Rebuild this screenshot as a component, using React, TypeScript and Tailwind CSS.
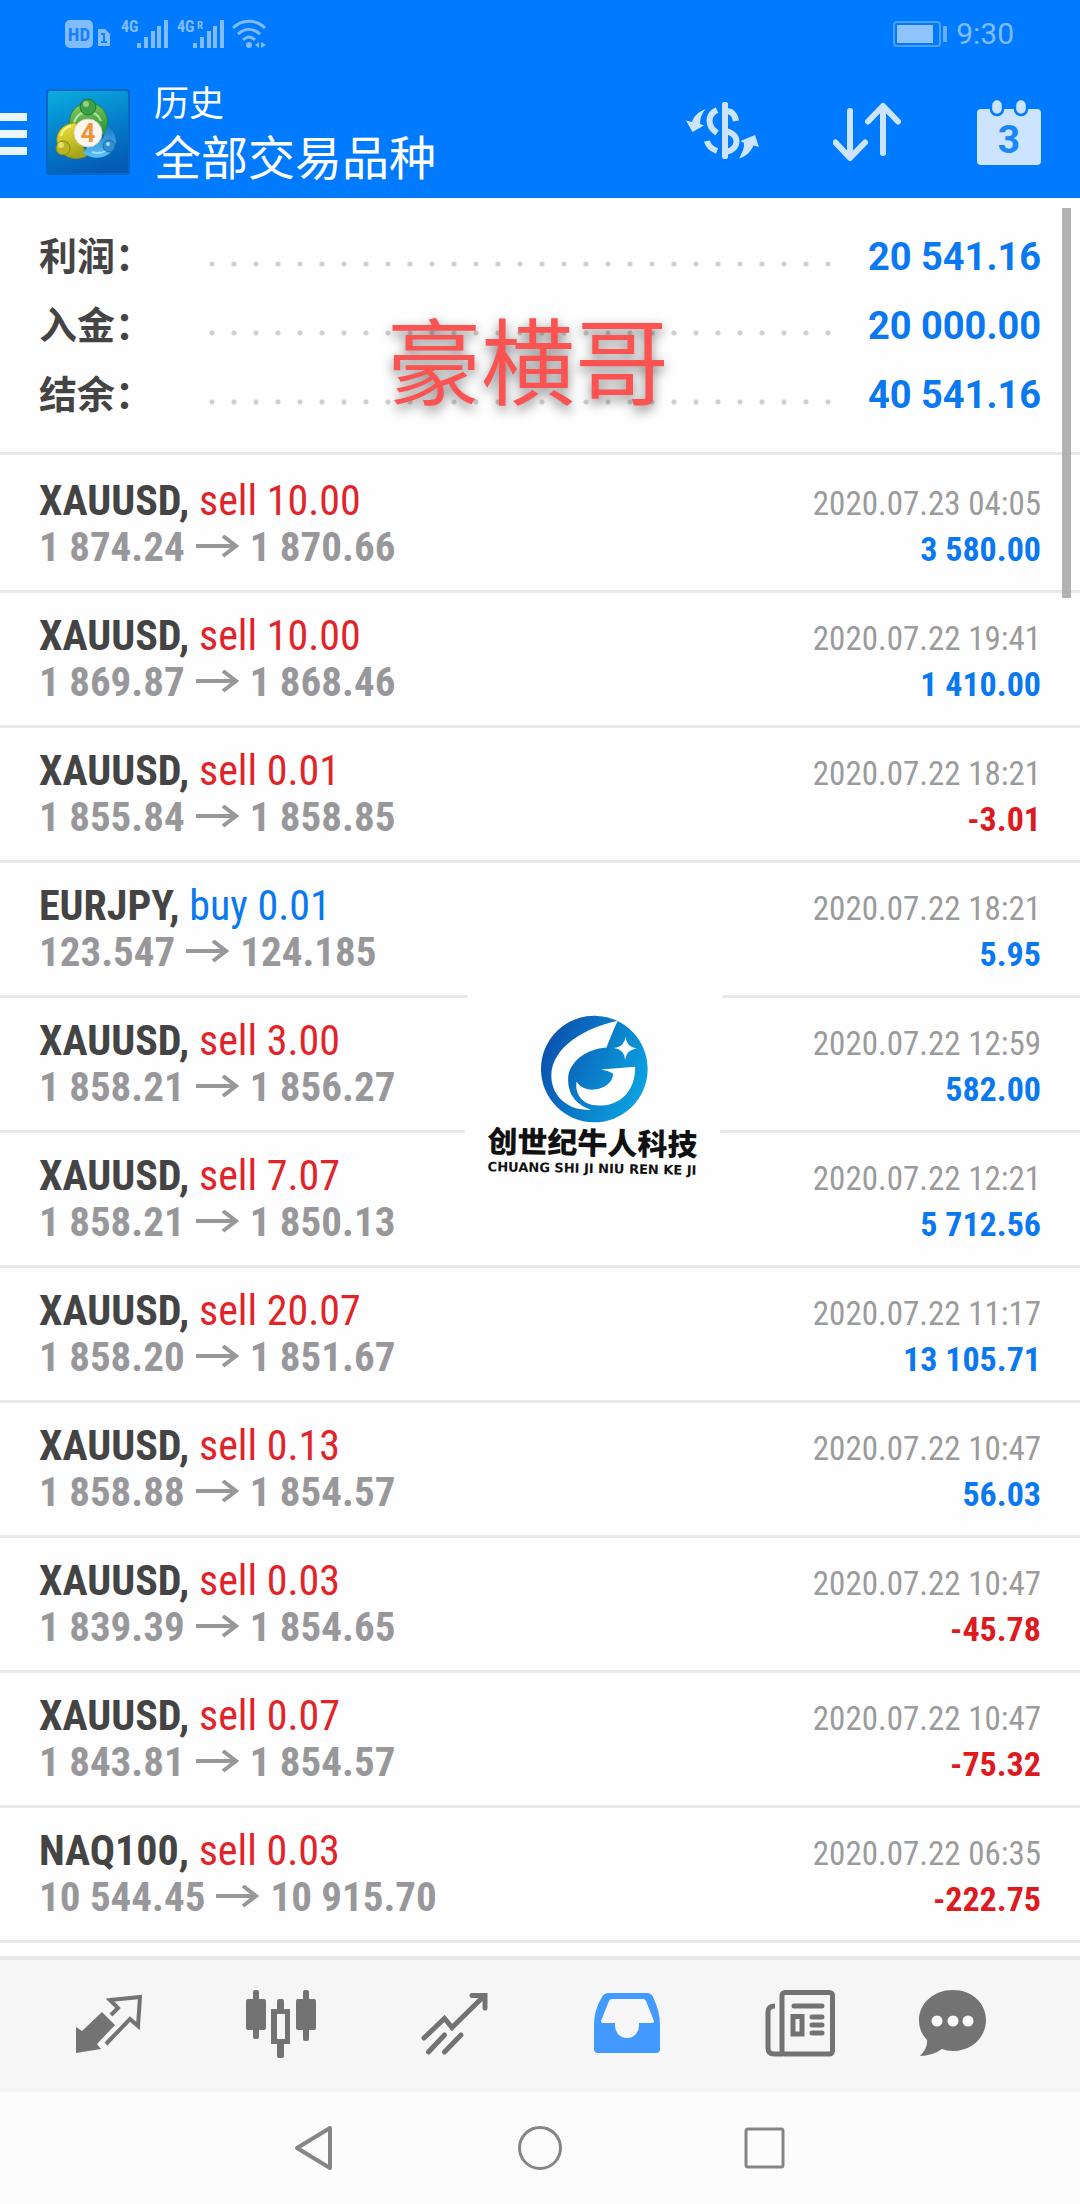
import React from 'react';

type Deal = {
  symbol: string;
  side: 'buy' | 'sell';
  volume: string;
  open: string;
  close: string;
  time: string;
  profit: string;
};

const summary = [
  { label: '利润：', value: '20 541.16' },
  { label: '入金：', value: '20 000.00' },
  { label: '结余：', value: '40 541.16' },
];

const deals: Deal[] = [
  { symbol: 'XAUUSD', side: 'sell', volume: '10.00', open: '1 874.24', close: '1 870.66', time: '2020.07.23 04:05', profit: '3 580.00' },
  { symbol: 'XAUUSD', side: 'sell', volume: '10.00', open: '1 869.87', close: '1 868.46', time: '2020.07.22 19:41', profit: '1 410.00' },
  { symbol: 'XAUUSD', side: 'sell', volume: '0.01', open: '1 855.84', close: '1 858.85', time: '2020.07.22 18:21', profit: '-3.01' },
  { symbol: 'EURJPY', side: 'buy', volume: '0.01', open: '123.547', close: '124.185', time: '2020.07.22 18:21', profit: '5.95' },
  { symbol: 'XAUUSD', side: 'sell', volume: '3.00', open: '1 858.21', close: '1 856.27', time: '2020.07.22 12:59', profit: '582.00' },
  { symbol: 'XAUUSD', side: 'sell', volume: '7.07', open: '1 858.21', close: '1 850.13', time: '2020.07.22 12:21', profit: '5 712.56' },
  { symbol: 'XAUUSD', side: 'sell', volume: '20.07', open: '1 858.20', close: '1 851.67', time: '2020.07.22 11:17', profit: '13 105.71' },
  { symbol: 'XAUUSD', side: 'sell', volume: '0.13', open: '1 858.88', close: '1 854.57', time: '2020.07.22 10:47', profit: '56.03' },
  { symbol: 'XAUUSD', side: 'sell', volume: '0.03', open: '1 839.39', close: '1 854.65', time: '2020.07.22 10:47', profit: '-45.78' },
  { symbol: 'XAUUSD', side: 'sell', volume: '0.07', open: '1 843.81', close: '1 854.57', time: '2020.07.22 10:47', profit: '-75.32' },
  { symbol: 'NAQ100', side: 'sell', volume: '0.03', open: '10 544.45', close: '10 915.70', time: '2020.07.22 06:35', profit: '-222.75' },
];

const SignalBars: React.FC<{ roaming?: boolean }> = ({ roaming }) => (
  <svg className="overflow-visible" width="48" height="30" viewBox="0 0 48 30" fill="currentColor">
    <text x="0" y="13" fontSize="16" fontWeight="700" fontFamily="Roboto Condensed, sans-serif">4G</text>
    {roaming && <text x="20" y="10" fontSize="11" fontWeight="700" fontFamily="Roboto Condensed, sans-serif">R</text>}
    <rect x="16" y="24" width="4" height="5" />
    <rect x="23" y="18" width="4" height="11" />
    <rect x="30" y="12" width="4" height="17" />
    <rect x="36" y="7" width="4" height="22" />
    <rect x="43" y="1" width="4" height="28" />
  </svg>
);

const StatusBar: React.FC = () => (
  <div className="flex h-[65px] items-center justify-between pl-[65px] pr-[66px] pt-[2px] text-[#80bcff]">
    <div className="flex items-center">
      <svg width="46" height="30" viewBox="0 0 46 30" fill="currentColor">
        <rect x="0" y="1" width="28" height="28" rx="5" />
        <text x="14" y="22" textAnchor="middle" fontSize="19" fontWeight="700" fill="#1a80f5" fontFamily="Roboto Condensed, sans-serif">HD</text>
        <path d="M33 10h7l5 5v12H33z" />
        <path d="M36 15h3v8M36 23h6" stroke="#1a80f5" strokeWidth="2" fill="none" />
      </svg>
      <div className="ml-[10px] flex gap-[8px]">
        <SignalBars />
        <SignalBars roaming />
      </div>
      <svg className="ml-[7px]" width="36" height="30" viewBox="0 0 36 30" fill="none" stroke="currentColor" strokeWidth="3">
        <path d="M1 9C10 0 24 0 33 9M6 15c7-6 15-6 22 0M11 21c4-4 8-4 12 0" />
        <circle cx="17" cy="26" r="3" fill="currentColor" stroke="none" />
        <path d="M27 23l-4 3 4 3zM29 23l5 3-5 3z" fill="currentColor" stroke="none" />
      </svg>
    </div>
    <div className="flex items-center gap-[8px]">
      <svg width="55" height="28" viewBox="0 0 55 28">
        <rect x="1" y="2" width="46" height="24" rx="3" fill="none" stroke="#4ba0ff" strokeWidth="2" />
        <rect x="4" y="5" width="36" height="18" fill="#90c4ff" />
        <rect x="50" y="6" width="4" height="16" rx="1" fill="#66afff" />
      </svg>
      <span className="font-['Roboto'] text-[30px] leading-none">9:30</span>
    </div>
  </div>
);

const AppLogo: React.FC = () => (
  <svg className="shrink-0" width="84" height="86" viewBox="0 0 84 86">
    <defs>
      <linearGradient id="tile" x1="0.3" y1="0" x2="0.6" y2="1">
        <stop offset="0" stopColor="#0aa6dc" />
        <stop offset="0.55" stopColor="#0579c8" />
        <stop offset="1" stopColor="#045bb4" />
      </linearGradient>
      <linearGradient id="green" x1="0" y1="0" x2="0.3" y2="1">
        <stop offset="0" stopColor="#8ccf63" />
        <stop offset="1" stopColor="#2f9a3c" />
      </linearGradient>
      <linearGradient id="yellow" x1="0" y1="0" x2="0.4" y2="1">
        <stop offset="0" stopColor="#f3e93c" />
        <stop offset="1" stopColor="#a8a51c" />
      </linearGradient>
      <linearGradient id="blue" x1="0" y1="0" x2="0" y2="1">
        <stop offset="0" stopColor="#1c7cc4" />
        <stop offset="1" stopColor="#5cc2f5" />
      </linearGradient>
    </defs>
    <rect width="84" height="86" rx="3" fill="#0467c6" />
    <rect x="2" y="2" width="80" height="82" rx="2" fill="url(#tile)" />
    <path d="M24 37a19 19 0 1 1 37 0l-2 8H27z" fill="url(#green)" stroke="#2b8138" />
    <path d="M28 34c2-7 7-11 14-11s11 4 13 9" fill="none" stroke="#b6e79c" strokeWidth="2" />
    <path d="M26 34C12 37 7 50 14 61c5 8 16 11 27 6l-5-12-7-10 2-11z" fill="url(#yellow)" stroke="#8f8c14" />
    <path d="M15 47c1-5 5-9 10-10" fill="none" stroke="#fbf694" strokeWidth="2" />
    <path d="M61 37c9 6 12 17 5 25-7 8-19 9-29 2l6-8 14-6z" fill="url(#blue)" />
    <path d="M46 63c9 3 16-1 20-9" fill="none" stroke="#9ddcff" strokeWidth="2" />
    <circle cx="42" cy="18" r="8" fill="#3d9e45" stroke="#22762f" />
    <circle cx="40" cy="15" r="3" fill="#8fd47c" />
    <circle cx="17" cy="59" r="7" fill="#b9b624" stroke="#858310" />
    <circle cx="15" cy="56" r="3" fill="#e4e069" />
    <circle cx="63" cy="57" r="6" fill="#2f8fd0" stroke="#1b6cae" />
    <circle cx="62" cy="55" r="2" fill="#a4dcfa" />
    <circle cx="42" cy="44" r="14" fill="#fdf6ee" stroke="#d8cfc2" />
    <text x="42" y="53" textAnchor="middle" fontSize="26" fontWeight="700" fill="#ee9440" fontFamily="Roboto, sans-serif">4</text>
  </svg>
);

const Header: React.FC = () => (
  <header className="bg-[#007aff] text-white">
    <StatusBar />
    <div className="flex h-[133px] items-center">
      <button aria-label="Menu" className="mr-[19px] flex w-[27px] flex-col gap-[9px] pt-[4px]">
        <span className="h-[8px] bg-[#eaf5ff]" />
        <span className="h-[8px] bg-[#eaf5ff]" />
        <span className="h-[8px] bg-[#eaf5ff]" />
      </button>
      <AppLogo />
      <div className="ml-[24px] flex-1 pt-[8px]">
        <p className="text-[35px] leading-[46px]">历史</p>
        <h1 className="text-[47px] leading-[62px]">全部交易品种</h1>
      </div>
      <div className="flex items-center gap-[73px] pr-[38px] text-[#cce4ff]">
        <button aria-label="Symbol">
          <svg width="74" height="60" viewBox="0 0 74 60" fill="currentColor">
            <path d="M19.700 7C12 10 8 14 6 20L0 18.500 6.500 30 18 23.500 14 22C14 16 16 11 19.700 7Z" />
            <path d="M53 56.500C56 51 58.500 46 58 41L54.500 39 69 33 73 45 67.500 43.500C65 49 61 54 53 56.500Z" />
            <rect x="36" y="0" width="6" height="57" rx="2" />
            <path d="M31 8C21 13 21 24 31 31M21 39c1 5 5 8 10 10M40 9c6 0 9 4 10 10M40 29c14 3 14 18 0 21" fill="none" stroke="currentColor" strokeWidth="6" />
          </svg>
        </button>
        <button aria-label="Sort">
          <svg width="70" height="60" viewBox="0 0 70 60" fill="none" stroke="currentColor" strokeWidth="6" strokeLinecap="round" strokeLinejoin="round">
            <path d="M17 9v46M2.500 40.500 17 56l15-15.500M50 51V5M35 19.500 50 4l15 15.500" />
          </svg>
        </button>
        <button aria-label="Period">
          <svg width="66" height="68" viewBox="0 0 66 68" fill="currentColor">
            <rect x="1" y="11" width="64" height="56" rx="4" />
            <rect x="15" y="1" width="12" height="16" rx="6" stroke="#007aff" strokeWidth="2.500" />
            <rect x="39" y="1" width="12" height="16" rx="6" stroke="#007aff" strokeWidth="2.500" />
            <text x="33" y="55" textAnchor="middle" fontSize="39" fontWeight="700" fill="#1a86f8" fontFamily="Roboto, sans-serif">3</text>
          </svg>
        </button>
      </div>
    </div>
  </header>
);

const Summary: React.FC = () => (
  <section className="relative border-b-[3px] border-[#e8e8e8] pb-[23px] pl-[39px] pr-[39px] pt-[24px]">
    <dl>
      {summary.map(s => (
        <div key={s.label} className="flex h-[69px] items-center">
          <dt className="w-[162px] text-[38px] font-bold leading-none text-[#444]">{s.label}</dt>
          <span className="mt-[14px] h-[6px] flex-1 bg-[radial-gradient(circle,#cfcfcf_0,#cfcfcf_2px,transparent_3px)] bg-[length:22px_6px]" />
          <dd className="w-[201px] text-right font-['Roboto'] text-[38px] font-bold leading-none text-[#0a78f0]">{s.value}</dd>
        </div>
      ))}
    </dl>
    <p className="absolute inset-x-0 top-[118px] pr-[24px] text-center text-[94px] leading-[100px] text-[#fb5252] [text-shadow:0_5px_12px_rgba(0,0,0,0.5)]">
      豪横哥
    </p>
  </section>
);

const DealRow: React.FC<{ deal: Deal }> = ({ deal }) => (
  <li className="border-b-[3px] border-[#e8e8e8] px-[39px] pb-[19px] pt-[19px] font-['Roboto_Condensed']">
    <div className="flex h-[47px] items-baseline justify-between leading-[47px]">
      <p className="text-[42px]">
        <b className="text-[#444]">{deal.symbol},</b>{' '}
        <span className={deal.side === 'sell' ? 'text-[#e0242a]' : 'text-[#0a78f0]'}>
          {deal.side} {deal.volume}
        </span>
      </p>
      <time className="text-[33px] text-[#9b9b9b]">{deal.time}</time>
    </div>
    <div className="flex h-[47px] items-baseline justify-between font-bold leading-[47px]">
      <p className="text-[41px] text-[#98989b]">
        {deal.open}
        <svg className="mx-[11px] inline-block align-baseline" width="43" height="26" viewBox="0 0 43 26" fill="none" stroke="currentColor" strokeWidth="4">
          <path d="M0 11h40M27 1l13 10-13 10" />
        </svg>
        {deal.close}
      </p>
      <span className={deal.profit.startsWith('-') ? 'text-[34px] text-[#dc1a20]' : 'text-[34px] text-[#0a78f0]'}>
        {deal.profit}
      </span>
    </div>
  </li>
);

const CompanyMark: React.FC = () => (
  <div className="absolute left-[466px] top-[789px] flex w-[255px] rotate-1 flex-col items-center bg-[#fefefe] pb-[10px] pt-[28px] text-[#111]">
    <svg width="108" height="108" viewBox="300 137 320 320">
      <defs>
        <linearGradient id="globe" x1="0" y1="0.3" x2="1" y2="0.7">
          <stop offset="0" stopColor="#0b50ae" />
          <stop offset="0.5" stopColor="#0a7cc8" />
          <stop offset="1" stopColor="#0ca4e4" />
        </linearGradient>
      </defs>
      <circle cx="460" cy="297" r="158" fill="url(#globe)" />
      <g fill="#fff">
        <path d="M527 153C430 175 333 235 333 318c0 55 45 106 120 100-48-14-70-48-70-90 0-48 50-90 112-95 10-28 20-54 32-80z" />
        <path d="M480 298l101-10c2 70-40 117-106 117-45 0-72-28-67-70 12 18 32 25 52 23 34-4 56-24 56-48-11-7-22-10-36-12z" />
        <path d="M551 200q3 30 33 34-30 4-33 34-3-30-34-34 31-4 34-34z" />
      </g>
    </svg>
    <p className="pt-[3px] text-[30px] font-black leading-[36px]">创世纪牛人科技</p>
    <p className="whitespace-nowrap font-['DejaVu_Sans'] text-[13px] font-bold leading-[14px]">CHUANG SHI JI NIU REN KE JI</p>
  </div>
);

const tabs = [
  {
    label: 'Quotes',
    icon: (
      <>
        <path d="M4 39l6 4 20-19 13 13-18 19 4 5-25 4z" fill="currentColor" />
        <path d="M39 27l7-7-8-8 30-3-2 29-8-7-24 25" stroke="currentColor" strokeWidth="4" />
      </>
    ),
  },
  {
    label: 'Chart',
    icon: (
      <g fill="currentColor">
        <rect x="1" y="11" width="20" height="31" rx="2" />
        <rect x="8" y="2" width="6" height="49" rx="2" />
        <path d="M26 21h6V13q0-2 2-2h3q2 0 2 2v8h6v35h-6v12q0 2-2 2h-3q-2 0-2-2V56h-6zM32 26v25h8V26z" fillRule="evenodd" />
        <rect x="51" y="11" width="20" height="31" rx="2" />
        <rect x="58" y="2" width="6" height="51" rx="2" />
      </g>
    ),
  },
  {
    label: 'Trade',
    icon: (
      <path
        d="M6 50l20.500-19.500 7.500 9L65 9M54 7.500h13V20M10.500 64l16-17M26.500 64l16.500-17"
        stroke="currentColor"
        strokeWidth="5"
        strokeLinecap="round"
      />
    ),
  },
  {
    label: 'History',
    icon: (
      <>
        <path d="M18 5h38q4 0 6 4 7 14 7 28v24q0 4-4 4H7q-4 0-4-4V37Q3 22 11 9q2-4 7-4z" fill="currentColor" />
        <path d="M21 11h31q2 0 3 2l8 20q0 2-2 2H48v3a12 12 0 0 1-24 0v-3H12q-2 0-2-2l8-20q1-2 3-2z" fill="#f7f7f7" />
      </>
    ),
  },
  {
    label: 'News',
    icon: (
      <g stroke="currentColor" strokeWidth="5">
        <rect x="18" y="4.500" width="50.500" height="61.500" rx="3" />
        <path d="M11 18q-7 0-7 6v36q0 6 6 6h9" />
        <path d="M30 18h28M48 29h10M48 37h10M48 45h10" strokeLinecap="round" />
        <rect x="29" y="28.500" width="9" height="17.500" />
      </g>
    ),
  },
];

const TabBar: React.FC = () => (
  <nav className="flex h-[136px] items-center border-t-[4px] border-[#e8e8e8] bg-[#f6f6f6] pb-[4px] pl-[21px] pr-[60px] text-[#737373]">
    {tabs.map(t => (
      <button key={t.label} aria-label={t.label} className={t.label === 'History' ? 'flex flex-1 justify-center text-[#4299ff]' : 'flex flex-1 justify-center'}>
        <svg width="72" height="72" viewBox="0 0 72 72" fill="none">{t.icon}</svg>
      </button>
    ))}
    <button aria-label="Messages" className="flex w-[134px] justify-center">
      <svg width="72" height="72" viewBox="0 0 72 72" fill="currentColor">
        <path d="M36 2c19 0 33 13 33 30S55 63 36 63q-6 0-11-2-10 7-22 7 8-8 7-16Q2 44 2 32C2 15 17 2 36 2z" />
        <g fill="#fff">
          <circle cx="20" cy="33" r="5.500" />
          <circle cx="36" cy="33" r="5.500" />
          <circle cx="51" cy="33" r="5.500" />
        </g>
      </svg>
    </button>
  </nav>
);

const SystemNav: React.FC = () => (
  <div className="flex h-[112px] items-center justify-center gap-[177px] bg-[#fcfcfc] text-[#858585]">
    <button aria-label="Back">
      <svg width="48" height="48" viewBox="0 0 48 48" fill="none" stroke="currentColor" strokeWidth="4" strokeLinejoin="round">
        <path d="M39 4v40L6 24z" />
      </svg>
    </button>
    <button aria-label="Home">
      <svg width="48" height="48" viewBox="0 0 48 48" fill="none" stroke="currentColor" strokeWidth="3">
        <circle cx="24" cy="24" r="20.500" />
      </svg>
    </button>
    <button aria-label="Recent">
      <svg width="48" height="48" viewBox="0 0 48 48" fill="none" stroke="currentColor" strokeWidth="3">
        <rect x="5" y="5" width="37" height="38" rx="2" />
      </svg>
    </button>
  </div>
);

const App: React.FC = () => (
  <div className="flex min-h-screen flex-col bg-[#fefefe] font-['Roboto','Noto_Sans_CJK_SC',sans-serif]">
    <Header />
    <main className="relative flex-1">
      <Summary />
      <ul className="pt-[3px]">
        {deals.map((d, i) => (
          <DealRow key={i} deal={d} />
        ))}
      </ul>
      <div className="absolute right-[9px] top-[10px] h-[390px] w-[9px] bg-[#a6a6a6]/85" />
      <CompanyMark />
    </main>
    <TabBar />
    <SystemNav />
  </div>
);

export default App;
